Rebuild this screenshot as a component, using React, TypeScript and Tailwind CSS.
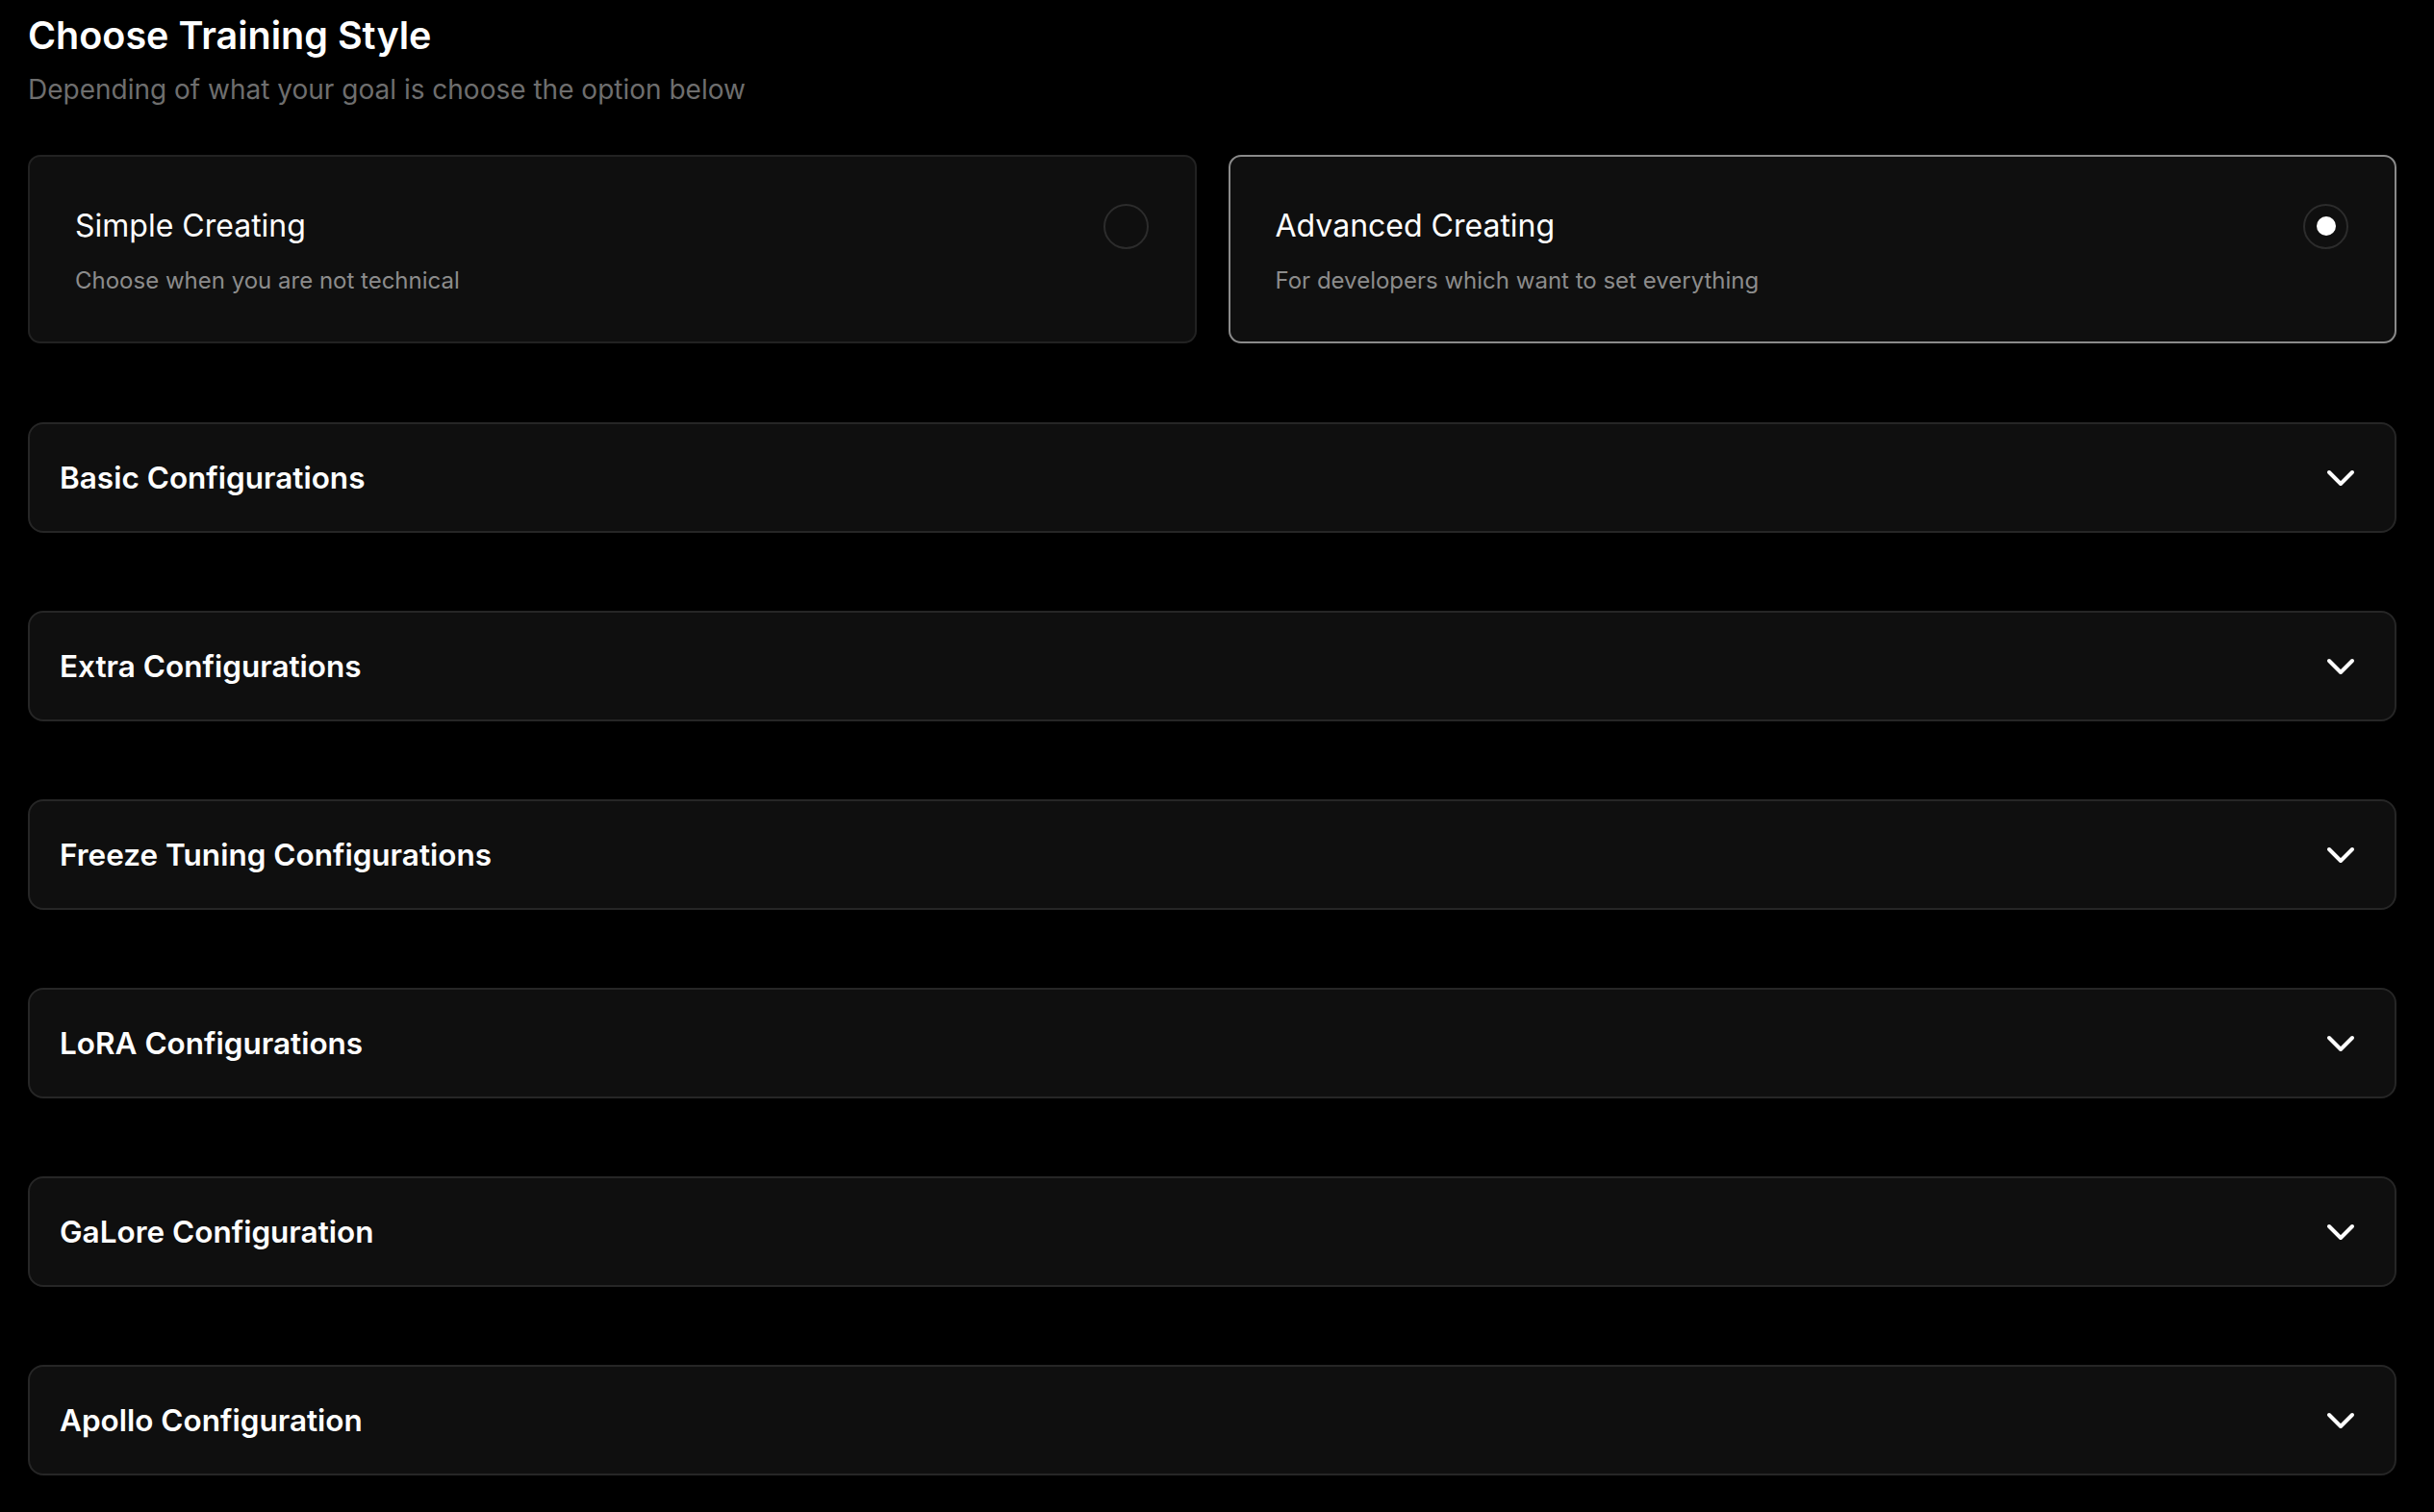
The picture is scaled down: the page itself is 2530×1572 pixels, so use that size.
import React, { useState } from 'react';
import { ChevronDown } from 'lucide-react';

type Style = 'simple' | 'advanced';

const options: { id: Style; title: string; description: string }[] = [
  { id: 'simple', title: 'Simple Creating', description: 'Choose when you are not technical' },
  { id: 'advanced', title: 'Advanced Creating', description: 'For developers which want to set everything' },
];

const sections = [
  'Basic Configurations',
  'Extra Configurations',
  'Freeze Tuning Configurations',
  'LoRA Configurations',
  'GaLore Configuration',
  'Apollo Configuration',
];

const App: React.FC = () => {
  const [style, setStyle] = useState<Style>('advanced');
  const [open, setOpen] = useState<string | null>(null);

  return (
    <div className="min-h-screen bg-black pl-[29px] pr-[39px] pt-[14px] pb-[40px] font-['Inter','Noto_Sans',sans-serif] text-white">
      {/* header */}
      <h1 className="text-[39.5px] leading-[47px] font-semibold">Choose Training Style</h1>
      <p className="mt-[14px] text-[28px] leading-[36px] text-[#6e6e6e]">
        Depending of what your goal is choose the option below
      </p>

      {/* style picker */}
      <div className="mt-[50px] grid grid-cols-2 gap-[33px]">
        {options.map((opt) => {
          const selected = style === opt.id;
          return (
            <button
              key={opt.id}
              type="button"
              onClick={() => setStyle(opt.id)}
              className={`rounded-[13px] border-2 bg-[#0f0f0f] pl-[47px] pr-[48px] pt-[52px] pb-[47px] text-left ${
                selected ? 'border-[#8a8a8a]' : 'border-[#222222]'
              }`}
            >
              <div className="flex h-[40px] items-center justify-between">
                <span className="text-[32px] leading-[40px]">{opt.title}</span>
                <span className="flex h-[47px] w-[47px] shrink-0 items-center justify-center rounded-full border-2 border-[#2c2c2c]">
                  {selected && <span className="h-[20px] w-[20px] rounded-full bg-white" />}
                </span>
              </div>
              <p className="mt-[21px] text-[24px] leading-[32px] text-[#8c8c8c]">{opt.description}</p>
            </button>
          );
        })}
      </div>

      {/* config sections */}
      <div className="mt-[82px] flex flex-col gap-[81px]">
        {sections.map((name) => (
          <button
            key={name}
            type="button"
            onClick={() => setOpen(open === name ? null : name)}
            className="flex h-[115px] items-center justify-between rounded-[16px] border-2 border-[#262626] bg-[#0f0f0f] pl-[31px] pr-[32px] text-left"
          >
            <span className="text-[31.5px] leading-[40px] font-semibold">{name}</span>
            <ChevronDown size={48} strokeWidth={2} className={open === name ? 'rotate-180' : ''} />
          </button>
        ))}
      </div>
    </div>
  );
};

export default App;
